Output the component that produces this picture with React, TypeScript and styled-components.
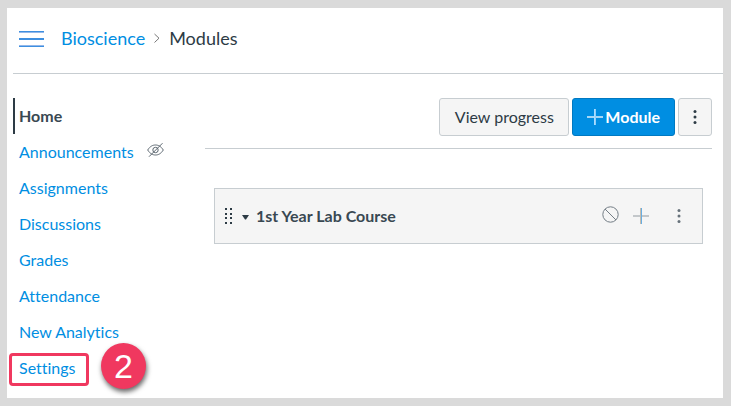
import React from "react";
import styled, { createGlobalStyle, css } from "styled-components";

const GlobalStyle = createGlobalStyle`
  *, *::before, *::after { box-sizing: border-box; }
  body {
    margin: 0;
    background: #dadada;
    color: #2d3b45;
    font: 16px/20px Lato, "Open Sans", sans-serif;
    font-variant-ligatures: none;
  }
  button { font: inherit; font-variant-ligatures: none; color: inherit; cursor: pointer; }
  svg { display: block; flex: none; }
`;

const Frame = styled.div`
  min-height: 100vh;
  padding: 8px 8px 8px 7px;
  display: flex;
`;

const Page = styled.div`
  flex: 1;
  min-width: 0;
  padding-left: 6px;
  background: #fff;
`;

const Header = styled.header`
  display: flex;
  align-items: center;
  gap: 17px;
  height: 66px;
  padding: 0 6px 4px;
  border-bottom: 1px solid #c7cdd1;
`;

const IconButton = styled.button`
  display: flex;
  align-items: center;
  justify-content: center;
  padding: 0;
  border: 0;
  background: none;
`;

const Crumbs = styled.ol`
  display: flex;
  align-items: center;
  gap: 8px;
  margin: 0;
  padding: 0 0 2px;
  list-style: none;
  font-size: 18px;
  line-height: 24px;
`;

const Crumb = styled.li`
  display: flex;
  align-items: center;
  gap: 8px;
`;

const Link = styled.a`
  color: #008ee2;
  text-decoration: none;
`;

const Body = styled.div`
  display: flex;
  padding: 24px 11px 12px 0;
`;

const Nav = styled.nav`
  flex: 0 0 192px;
`;

const NavList = styled.ul`
  margin: 0;
  padding: 0;
  list-style: none;
`;

const NavItem = styled.li`
  position: relative;
  display: flex;
  align-items: center;
  gap: 13px;
  height: 36px;
`;

const NavLink = styled(Link)<{ $active?: boolean }>`
  display: flex;
  align-items: center;
  height: 36px;
  padding-left: 6px;
  ${(p) =>
    p.$active &&
    css`
      padding-left: 4px;
      border-left: 2px solid #2d3b45;
      color: #394852;
      font-weight: 700;
    `}
`;

const Highlight = styled.span`
  position: absolute;
  top: 3px;
  left: -4px;
  width: 80px;
  height: 33px;
  border: 3px solid #f0385f;
  border-radius: 4px;
  pointer-events: none;
`;

const StepBadge = styled.span`
  position: absolute;
  top: -7px;
  left: 88px;
  display: flex;
  align-items: center;
  justify-content: center;
  width: 45px;
  height: 46px;
  border-radius: 50%;
  background: #f0385f;
  box-shadow: 1px 3px 5px rgba(0, 0, 0, 0.6);
  color: #fff;
  font: 34px/46px "Liberation Sans", Arial, sans-serif;
`;

const Main = styled.main`
  flex: 1;
  min-width: 0;
`;

const Toolbar = styled.div`
  display: flex;
  justify-content: flex-end;
  gap: 3px;
  padding-bottom: 12px;
  border-bottom: 1px solid #c7cdd1;
`;

const Button = styled.button<{ $primary?: boolean; $narrow?: boolean }>`
  display: flex;
  align-items: center;
  justify-content: center;
  gap: 2px;
  height: 38px;
  min-width: ${(p) => (p.$narrow ? 34 : p.$primary ? 0 : 130)}px;
  padding: 0 ${(p) => (p.$narrow ? 0 : 14)}px;
  border: 1px solid ${(p) => (p.$primary ? "#0079c1" : "#c7cdd1")};
  border-radius: 3px;
  background: ${(p) => (p.$primary ? "#008ee2" : "#f5f5f5")};
  color: ${(p) => (p.$primary ? "#fff" : "#2d3b45")};
  font-weight: ${(p) => (p.$primary ? 700 : 400)};
  white-space: nowrap;
`;

const ModuleRow = styled.section`
  display: flex;
  align-items: center;
  height: 56px;
  margin: 39px 9px 0;
  padding: 0 7px 0 10px;
  border: 1px solid #c7cdd1;
  background: #f5f5f5;
`;

const ModuleTitle = styled.h2`
  flex: 1;
  margin: 0 0 0 7px;
  color: #394852;
  font-size: 16px;
  line-height: 20px;
  font-weight: 700;
`;

const Toggle = styled(IconButton)`
  margin-left: 8px;
`;

const Actions = styled.div`
  display: flex;
  align-items: center;
  gap: 14px;
`;

const MenuIcon = () => (
  <svg width="25" height="16" viewBox="0 0 25 16" shapeRendering="crispEdges" aria-hidden>
    <path d="M0 0h25v1H0zM0 7h25v2H0zM0 15h25v1H0z" fill="#3d8fe0" />
    <path d="M0 1h25v1H0zM0 14h25v1H0z" fill="#92b7ea" />
  </svg>
);

const ChevronIcon = () => (
  <svg width="8" height="10" viewBox="0 0 8 10" fill="none" stroke="#777" aria-hidden>
    <path d="M1.500 1l4.500 4.200L1.500 9.500" />
  </svg>
);

const HiddenIcon = () => (
  <svg width="17" height="16" viewBox="0 0 17 16" fill="none" stroke="#5c6770" aria-label="Hidden">
    <path d="M.7 8C3.200 4 6 3 8.500 3s5.300 1 7.800 5c-2.500 4-5.300 5-7.800 5S3.200 12 .7 8z" />
    <circle cx="8.500" cy="8" r="2.700" />
    <path d="M2 14.700L15.500 1.200" />
  </svg>
);

const PlusIcon = ({ light }: { light?: boolean }) => (
  <svg width="16" height="16" viewBox="0 0 16 16" shapeRendering="crispEdges" aria-hidden>
    <path d="M0 7h16v2H0z" fill={light ? "#a6d7f5" : "#c3c7ca"} />
    <path d="M7 0h1v16H7z" fill={light ? "#a9dcff" : "#c5bcae"} />
    <path d="M8 0h1v16H8z" fill={light ? "#8fd0fa" : "#68aee3"} />
  </svg>
);

const KebabIcon = ({ color }: { color: string }) => (
  <svg width="4" height="16" viewBox="0 0 4 16" fill={color} aria-hidden>
    <circle cx="2" cy="2.500" r="1.500" />
    <circle cx="2" cy="8" r="1.500" />
    <circle cx="2" cy="13.500" r="1.500" />
  </svg>
);

const GripIcon = () => (
  <svg width="8" height="16" viewBox="0 0 8 16" fill="#2d3b45" aria-hidden>
    {[0, 5].map((x) =>
      [0, 5, 9, 14].map((y) => <rect key={`${x}-${y}`} x={x} y={y} width="2" height="2" />)
    )}
  </svg>
);

const CaretIcon = () => (
  <svg width="8" height="16" viewBox="0 0 8 16" fill="#2d3b45" aria-hidden>
    <path d="M1 7h7L5 11.500H4z" />
  </svg>
);

const UnpublishedIcon = () => (
  <svg width="17" height="17" viewBox="0 0 17 17" fill="none" stroke="#737d85" aria-hidden>
    <circle cx="8.500" cy="8.500" r="7.700" />
    <path d="M3 3l11 11" />
  </svg>
);

const items = [
  { label: "Home", active: true },
  { label: "Announcements", hidden: true },
  { label: "Assignments" },
  { label: "Discussions" },
  { label: "Grades" },
  { label: "Attendance" },
  { label: "New Analytics" },
  { label: "Settings", step: 2 },
];

const StatusButton = styled(IconButton)`
  padding-bottom: 3px;
`;

const HiddenMark = styled.span`
  padding-bottom: 5px;
`;

const MoreButton = styled(IconButton)`
  width: 32px;
`;

export default function App() {
  return (
    <>
      <GlobalStyle />
      <Frame>
        <Page>
          <Header>
            <IconButton aria-label="Course navigation menu">
              <MenuIcon />
            </IconButton>
            <nav aria-label="Breadcrumb">
              <Crumbs>
                <Crumb>
                  <Link href="#bioscience">Bioscience</Link>
                  <ChevronIcon />
                </Crumb>
                <Crumb aria-current="page">Modules</Crumb>
              </Crumbs>
            </nav>
          </Header>
          <Body>
            <Nav aria-label="Course">
              <NavList>
                {items.map((item) => (
                  <NavItem key={item.label}>
                    <NavLink href="#" $active={item.active}>
                      {item.label}
                    </NavLink>
                    {item.hidden && (
                      <HiddenMark>
                        <HiddenIcon />
                      </HiddenMark>
                    )}
                    {item.step && (
                      <>
                        <Highlight />
                        <StepBadge>{item.step}</StepBadge>
                      </>
                    )}
                  </NavItem>
                ))}
              </NavList>
            </Nav>
            <Main>
              <Toolbar>
                <Button>View progress</Button>
                <Button $primary>
                  <PlusIcon light />
                  Module
                </Button>
                <Button $narrow aria-label="Module options">
                  <KebabIcon color="#2d3b45" />
                </Button>
              </Toolbar>
              <ModuleRow>
                <GripIcon />
                <Toggle aria-label="Collapse module">
                  <CaretIcon />
                </Toggle>
                <ModuleTitle>1st Year Lab Course</ModuleTitle>
                <Actions>
                  <StatusButton aria-label="Publish module">
                    <UnpublishedIcon />
                  </StatusButton>
                  <IconButton aria-label="Add item">
                    <PlusIcon />
                  </IconButton>
                  <MoreButton aria-label="Manage module">
                    <KebabIcon color="#66717a" />
                  </MoreButton>
                </Actions>
              </ModuleRow>
            </Main>
          </Body>
        </Page>
      </Frame>
    </>
  );
}
